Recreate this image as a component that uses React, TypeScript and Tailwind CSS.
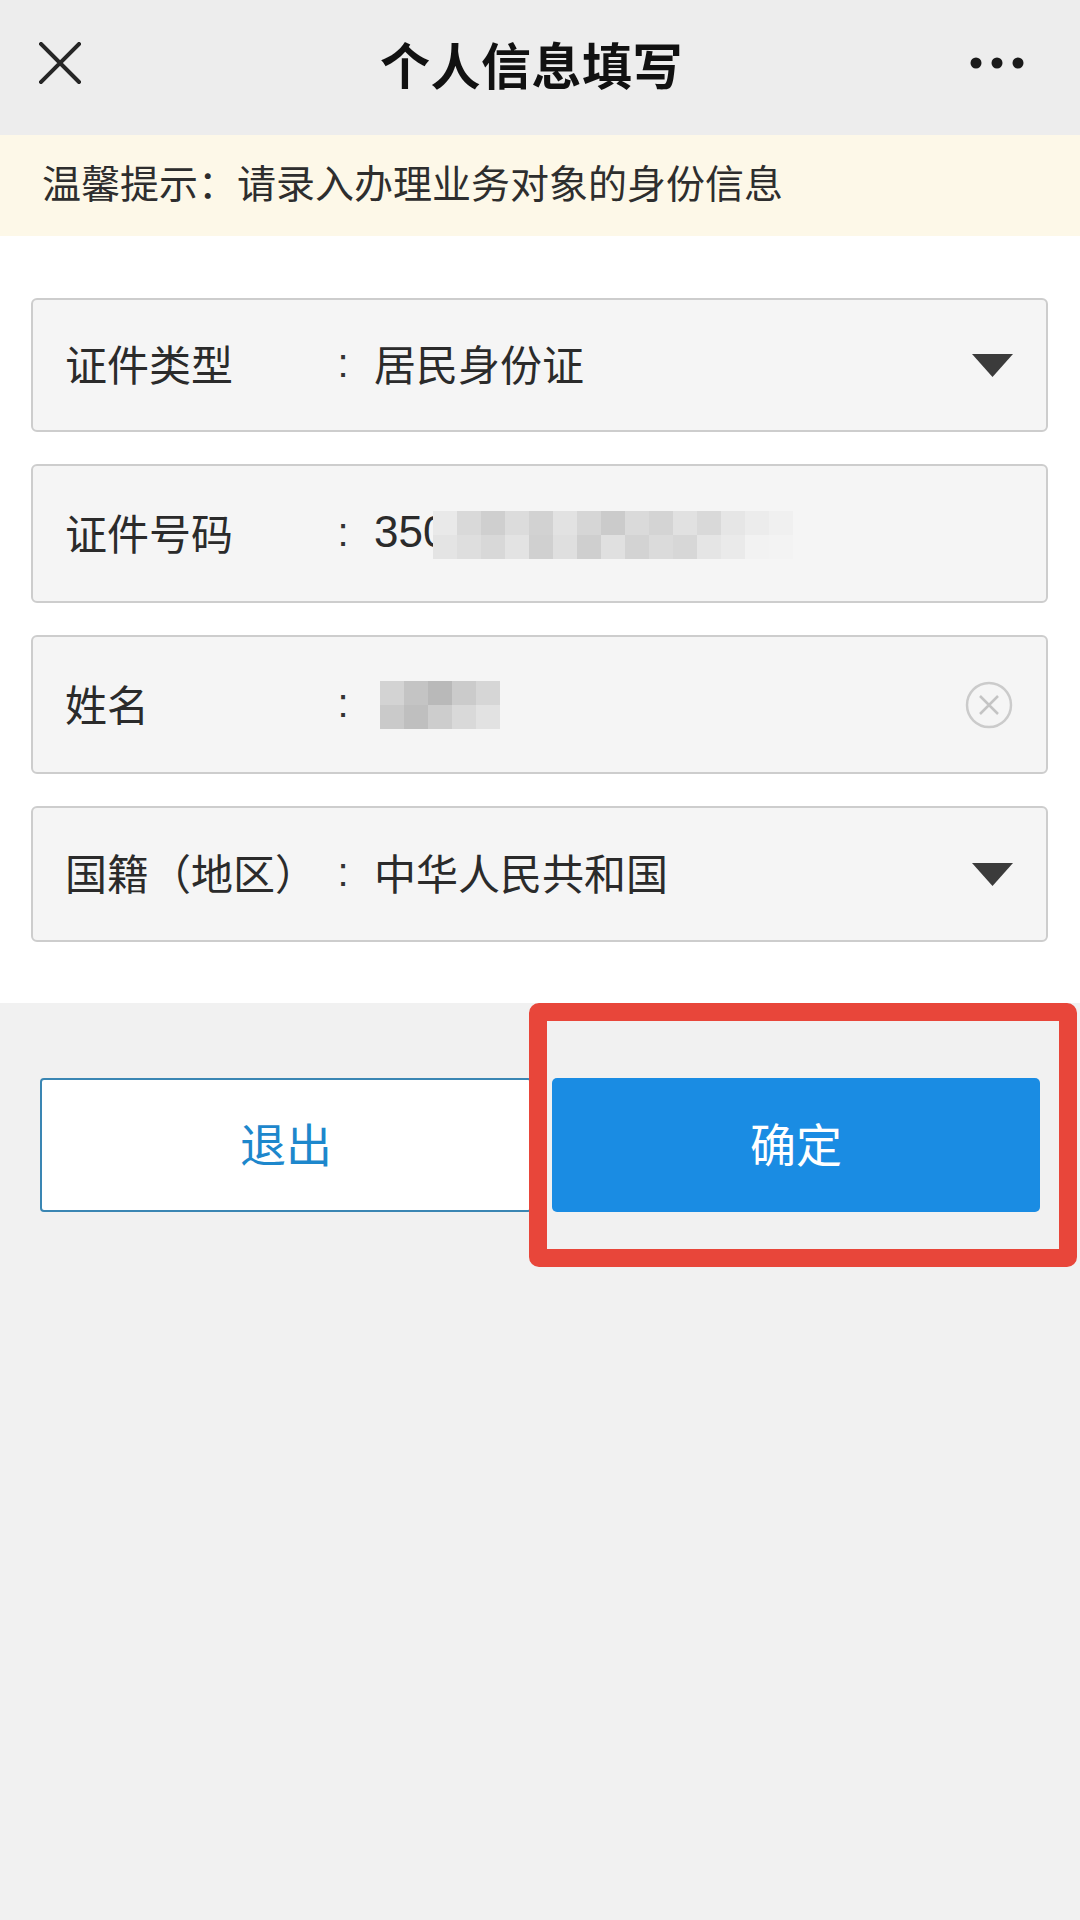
import type { ReactNode } from "react";

const font = { fontFamily: '"Noto Sans CJK SC", "Noto Sans", sans-serif' };

function CloseIcon() {
  return (
    <svg width="42" height="42" viewBox="0 0 42 42">
      <path d="M2 2 L40 40 M40 2 L2 40" stroke="#262626" strokeWidth="4" strokeLinecap="square" />
    </svg>
  );
}

function MoreIcon() {
  return (
    <svg width="54" height="12" viewBox="0 0 54 12">
      <circle cx="6" cy="6" r="5.5" fill="#1a1a1a" />
      <circle cx="27" cy="6" r="5.5" fill="#1a1a1a" />
      <circle cx="48" cy="6" r="5.5" fill="#1a1a1a" />
    </svg>
  );
}

function Caret() {
  return (
    <svg width="41" height="23" viewBox="0 0 41 23">
      <polygon points="0,0 41,0 20.5,23" fill="#3b3b3b" />
    </svg>
  );
}

function ClearIcon() {
  return (
    <svg width="48" height="48" viewBox="0 0 48 48">
      <circle cx="24" cy="24" r="22" fill="none" stroke="#cbcbcb" strokeWidth="2.5" />
      <path d="M15 15 L33 33 M33 15 L15 33" stroke="#c4c4c4" strokeWidth="2.5" />
    </svg>
  );
}

// pixelated redaction block
function Mosaic({ cols, shades }: { cols: number; shades: string[] }) {
  return (
    <div className="grid blur-[0.6px]" style={{ gridTemplateColumns: `repeat(${cols}, 24px)` }}>
      {shades.map((c, i) => (
        <div key={i} className="h-[24px]" style={{ backgroundColor: c }} />
      ))}
    </div>
  );
}

interface FieldProps {
  label: string;
  height: string;
  children: ReactNode;
  right?: ReactNode;
}

function Field({ label, height, children, right }: FieldProps) {
  return (
    <div
      className={`flex items-center rounded-[6px] border-2 border-[#cdcdcd] bg-[#f5f5f5] pb-[4px] pl-[32px] pr-[33px] ${height}`}
    >
      <div className="w-[265px] shrink-0 whitespace-nowrap text-[42px] leading-none text-[#2b2b2b]">{label}</div>
      <div className="w-[26px] shrink-0 text-center text-[40px] leading-none text-[#333]" style={{ fontFamily: '"Liberation Sans", sans-serif' }}>
        :
      </div>
      <div className="flex flex-1 items-center pl-[18px] text-[42px] leading-none text-[#2b2b2b]">{children}</div>
      <div className="pt-[4px]">{right}</div>
    </div>
  );
}

const idShades = [
  "#e9e9e9", "#d9d9d9", "#cfcfcf", "#dcdcdc", "#d2d2d2", "#e2e2e2", "#d6d6d6", "#cbcbcb", "#dadada", "#d4d4d4", "#e1e1e1", "#d9d9d9", "#e6e6e6", "#ececec", "#f0f0f0",
  "#e4e4e4", "#dedede", "#d8d8d8", "#e3e3e3", "#d0d0d0", "#dfdfdf", "#cfcfcf", "#e0e0e0", "#d3d3d3", "#dbdbdb", "#d7d7d7", "#e5e5e5", "#eaeaea", "#f2f2f2", "#f3f3f3",
];

const nameShades = ["#d3d3d3", "#c4c4c4", "#b9b9b9", "#cbcbcb", "#d6d6d6", "#cacaca", "#bfbfbf", "#cdcdcd", "#d9d9d9", "#e2e2e2"];

export default function App() {
  return (
    <div className="relative min-h-[1920px] w-[1080px] bg-[#f1f1f1]" style={font}>
      {/* title bar */}
      <header className="flex h-[135px] items-center bg-[#ededed] pb-[10px] pl-[39px] pr-[56px]">
        <div className="flex w-[100px]">
          <CloseIcon />
        </div>
        <h1 className="flex-1 text-center text-[50px] font-bold leading-none tracking-[0.5px] text-[#111]">个人信息填写</h1>
        <div className="flex w-[100px] justify-end">
          <MoreIcon />
        </div>
      </header>

      {/* tip */}
      <div className="flex h-[101px] items-center bg-[#fdf8e8] px-[42px] pb-[8px] text-[39px] leading-none text-[#2e2e2e]">
        温馨提示：请录入办理业务对象的身份信息
      </div>

      {/* form */}
      <div className="flex flex-col gap-[32px] bg-white pb-[61px] pl-[31px] pr-[32px] pt-[62px]">
        <Field label="证件类型" height="h-[134px]" right={<Caret />}>
          居民身份证
        </Field>
        <Field label="证件号码" height="h-[139px]">
          <span style={{ fontFamily: '"Liberation Sans", sans-serif' }} className="text-[44px]">350</span>
          <div className="-ml-[14px] mt-[6px]">
            <Mosaic cols={15} shades={idShades} />
          </div>
        </Field>
        <Field label="姓名" height="h-[139px]" right={<ClearIcon />}>
          <div className="ml-[6px] mt-[4px]">
            <Mosaic cols={5} shades={nameShades} />
          </div>
        </Field>
        <Field label="国籍（地区）" height="h-[136px]" right={<Caret />}>
          中华人民共和国
        </Field>
      </div>

      {/* actions */}
      <div className="flex gap-[20px] pl-[40px] pr-[40px] pt-[75px]">
        <button className="flex h-[134px] flex-1 items-center justify-center rounded-[4px] border-2 border-[#3a86b3] bg-white pb-[6px] text-[46px] leading-none text-[#1d87cc]">
          退出
        </button>
        <button className="flex h-[134px] flex-1 items-center justify-center rounded-[5px] bg-[#1a8ce3] pb-[6px] text-[46px] leading-none text-white">
          确定
        </button>
      </div>

      {/* annotation frame */}
      <div className="pointer-events-none absolute left-[529px] top-[1003px] h-[264px] w-[548px] rounded-[10px] border-[18px] border-[#e8463a]" />
    </div>
  );
}
